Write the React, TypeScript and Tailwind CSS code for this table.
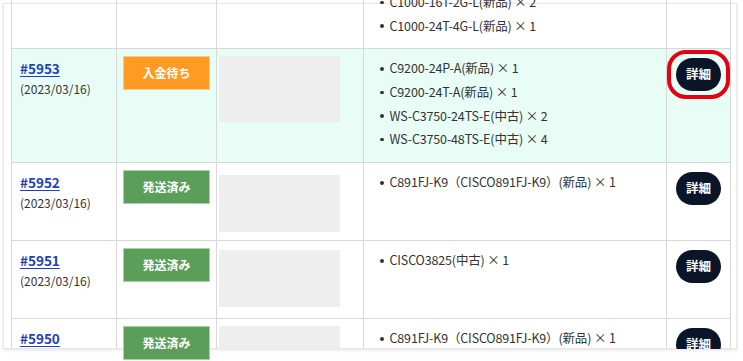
import React from "react";

type Row = {
  id: string;
  date: string;
  status: "wait" | "sent";
  img: { h: string; mt: string };
  items: string[];
  h: string;
  active?: boolean;
  ring?: boolean;
};

const rows: Row[] = [
  {
    id: "#5953",
    date: "(2023/03/16)",
    status: "wait",
    img: { h: "h-[66px]", mt: "mt-[7px]" },
    items: [
      "C9200-24P-A(新品) × 1",
      "C9200-24T-A(新品) × 1",
      "WS-C3750-24TS-E(中古) × 2",
      "WS-C3750-48TS-E(中古) × 4",
    ],
    h: "h-[114px]",
    active: true,
    ring: true,
  },
  {
    id: "#5952",
    date: "(2023/03/16)",
    status: "sent",
    img: { h: "h-[57px]", mt: "mt-[12px]" },
    items: ["C891FJ-K9（CISCO891FJ-K9）(新品) × 1"],
    h: "h-[78px]",
  },
  {
    id: "#5951",
    date: "(2023/03/16)",
    status: "sent",
    img: { h: "h-[57px]", mt: "mt-[9px]" },
    items: ["CISCO3825(中古) × 1"],
    h: "h-[78px]",
  },
  {
    id: "#5950",
    date: "(2023/03/16)",
    status: "sent",
    img: { h: "h-[57px]", mt: "mt-[7px]" },
    items: ["C891FJ-K9（CISCO891FJ-K9）(新品) × 1"],
    h: "h-[78px]",
  },
];

const Badge = ({ status }: { status: Row["status"] }) =>
  status === "wait" ? (
    <div className="w-[87px] h-[34px] flex items-center justify-center bg-[#ff9a22] border border-[#ffc983] text-white text-[12px] font-bold">
      入金待ち
    </div>
  ) : (
    <div className="w-[87px] h-[34px] flex items-center justify-center bg-[#5a9e5a] border border-[#a8d4a8] text-white text-[12px] font-bold">
      発送済み
    </div>
  );

const Items = ({ items }: { items: string[] }) => (
  <ul className="pl-[16px] pt-[8px]">
    {items.map((it, i) => (
      <li key={i} className="flex items-center h-[23.6px] text-[12.5px] tracking-[-0.15px] text-[#333]">
        <span className="w-[3.5px] h-[3.5px] rounded-full bg-[#333] mr-[6px] shrink-0" />
        {it}
      </li>
    ))}
  </ul>
);

const DetailButton = ({ ring }: { ring?: boolean }) => (
  <div className="relative flex justify-center pt-[9px]">
    {ring && (
      <div className="absolute left-[0px] top-[1px] w-[63px] h-[49px] rounded-[19px] border-[4px] border-[#e60012]" />
    )}
    <button className="w-[45px] h-[33px] rounded-full bg-[#0a1628] text-white text-[12.5px] font-bold">
      詳細
    </button>
  </div>
);

const grid = "grid grid-cols-[105px_100px_147px_303px_64px] border-b border-[#d8d8d8]";
const cell = "border-r border-[#d8d8d8]";

export default function App() {
  return (
    <div
      className="relative w-[743px] h-[361px] overflow-hidden bg-white"
      style={{ fontFamily: '"Noto Sans CJK JP", sans-serif' }}
    >
      <div className="absolute left-[3px] top-[3px] w-[734px] h-[346px] border border-[#e8e8e8] shadow-[0_1px_3px_rgba(0,0,0,0.12)]" />

      <div className="relative h-[349px] overflow-hidden pl-[11px]">
        <div className="w-[720px] border-l border-[#d8d8d8] mt-[-41px]">
          <div className={`${grid} h-[90px]`}>
            <div className={cell} />
            <div className={cell} />
            <div className={cell} />
            <div className={cell}>
              <Items
                items={[
                  "C1000-8T-2G-L(新品) × 1",
                  "C1000-16T-2G-L(新品) × 2",
                  "C1000-24T-4G-L(新品) × 1",
                ]}
              />
            </div>
            <div className={cell} />
          </div>

          {rows.map((r) => (
            <div key={r.id} className={`${grid} ${r.h} ${r.active ? "bg-[#e9fdf7]" : ""}`}>
              <div className={`${cell} pl-[8px] pt-[8px]`}>
                <a
                  href="#"
                  className="block text-[13.5px] leading-[22px] font-bold text-[#1d3fb8] underline underline-offset-2"
                >
                  {r.id}
                </a>
                <div className="text-[12px] leading-[20px] text-[#333]">{r.date}</div>
              </div>
              <div className={`${cell} pl-[6px] pt-[7px]`}>
                {r.id !== "#5950" && <Badge status={r.status} />}
              </div>
              <div className={`${cell} pl-[2px]`}>
                <div className={`w-[121px] ${r.img.h} ${r.img.mt} bg-[#eeeeee]`} />
              </div>
              <div className={cell}>
                <Items items={r.items} />
              </div>
              <div className={cell}>
                <DetailButton ring={r.ring} />
              </div>
            </div>
          ))}
        </div>
      </div>

      <div className="absolute left-[123px] top-[326px]">
        <Badge status="sent" />
      </div>
    </div>
  );
}
